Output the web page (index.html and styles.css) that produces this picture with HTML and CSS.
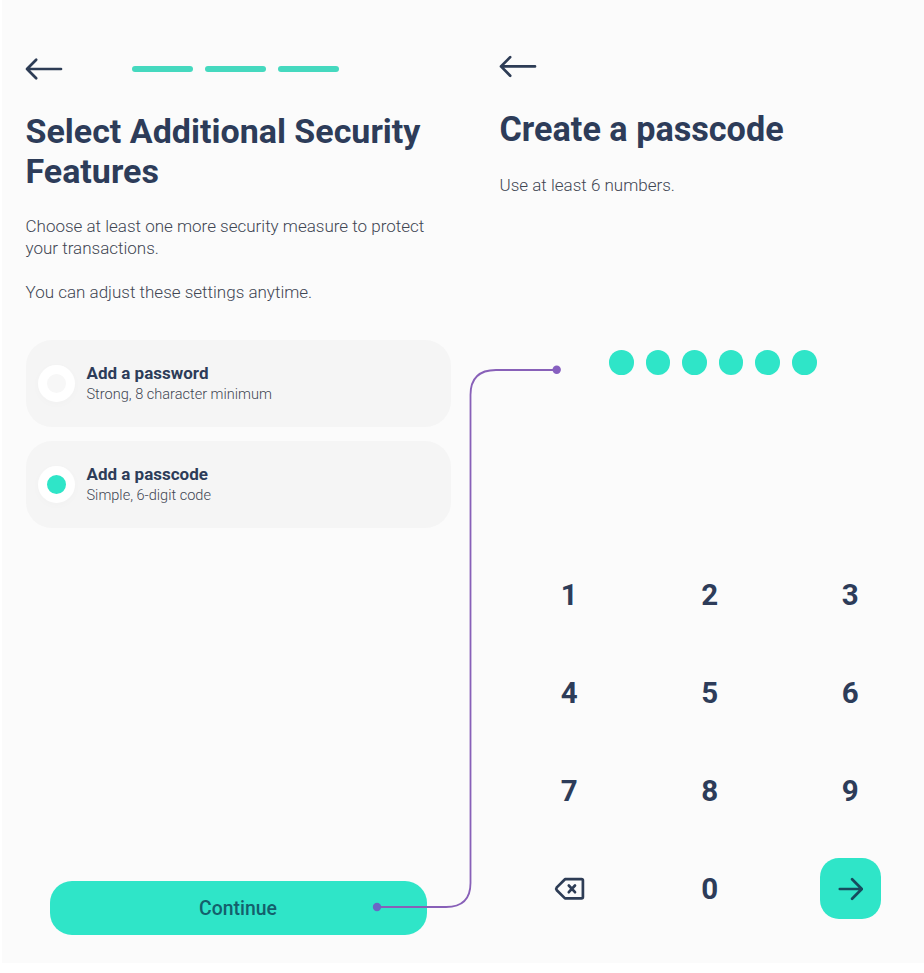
FILE: index.html
```html
<!DOCTYPE html>
<html lang="en">
<head>
<meta charset="utf-8">
<title>Security setup</title>
<link rel="stylesheet" href="styles.css">
</head>
<body>
<main class="board">
  <section class="screen screen-features">
    <header class="topbar">
      <svg class="back" width="38" height="24" viewBox="0 0 38 24"><path d="M36 12H2M11.200 2.700L2 12L11.200 21.300"/></svg>
      <div class="steps"><span class="step"></span><span class="step"></span><span class="step"></span></div>
    </header>
    <h1 class="title">Select Additional Security<br>Features</h1>
    <p class="copy">Choose at least one more security measure to protect<br>your transactions.</p>
    <p class="copy">You can adjust these settings anytime.</p>
    <div class="options">
      <div class="option">
        <span class="radio"></span>
        <div class="option-text"><div class="option-name">Add a password</div><div class="option-note">Strong, 8 character minimum</div></div>
      </div>
      <div class="option">
        <span class="radio radio-on"></span>
        <div class="option-text"><div class="option-name">Add a passcode</div><div class="option-note">Simple, 6-digit code</div></div>
      </div>
    </div>
    <button class="continue">Continue</button>
  </section>

  <section class="screen screen-passcode">
    <header class="topbar">
      <svg class="back" width="38" height="24" viewBox="0 0 38 24"><path d="M36 12.400H2M11.200 3.100L2 12.400L11.200 21.700"/></svg>
    </header>
    <h1 class="title">Create a passcode</h1>
    <p class="copy">Use at least 6 numbers.</p>
    <div class="dots"><i class="dot"></i><i class="dot"></i><i class="dot"></i><i class="dot"></i><i class="dot"></i><i class="dot"></i></div>
    <div class="keypad">
      <span class="key">1</span><span class="key">2</span><span class="key">3</span>
      <span class="key">4</span><span class="key">5</span><span class="key">6</span>
      <span class="key">7</span><span class="key">8</span><span class="key">9</span>
      <span class="key"><svg class="erase" width="32" height="24" viewBox="-1.500 0 32 24"><path d="M10.500 2.200H27Q28.400 2.200 28.400 3.600V20Q28.400 21.400 27 21.400H10.500L2.300 13.200Q1.200 11.800 2.300 10.400Z"/><path d="M14.300 8.500L20.500 15.200M20.500 8.500L14.300 15.200"/></svg></span>
      <span class="key">0</span>
      <span class="key"><span class="submit"><svg width="26" height="24" viewBox="0 0 26 24"><path d="M2.800 12H24.800M15.100 2.200L24.800 12L15.100 21.800"/></svg></span></span>
    </div>
  </section>

  <svg class="connector" width="200" height="560" viewBox="0 0 200 560">
    <path d="M191 15H130Q104.500 15 104.500 40V528Q104.500 552 80 552H11"/>
    <circle cx="190.700" cy="14.700" r="4.200"/><circle class="start" cx="11" cy="552" r="4.200"/>
  </svg>
</main>
</body>
</html>
```
FILE: styles.css
```css
* { box-sizing: border-box; }
body { margin: 0; background: #fff; font-family: Roboto, sans-serif; color: #2d3c59; }
.board { position: relative; display: flex; width: 924px; height: 963px; padding-left: 2px; overflow: hidden; }
.screen { background: #fbfbfb; height: 963px; display: flex; flex-direction: column; }
.screen-features { width: 474px; padding: 57px 0 0 23.5px; }
.screen-passcode { width: 448px; padding: 54px 0 0 23.5px; }
.topbar { display: flex; align-items: center; height: 24px; }
.back { display: block; flex: none; margin-left: -1px; }
svg path { fill: none; stroke: #2d3c55; stroke-width: 2.7; stroke-linecap: round; stroke-linejoin: round; }
.steps { display: flex; gap: 12px; margin-left: 69.5px; }
.step { width: 61px; height: 6.5px; border-radius: 4px; background: #45d9bf; }
.title { margin: 30px 0 0; font-size: 34px; line-height: 40px; font-weight: 700; white-space: nowrap; }
.screen-passcode .title { margin-top: 31px; font-size: 34.2px; }
.copy { margin: 24px 0 0; font-size: 17px; line-height: 22px; font-weight: 300; color: #3f4653; white-space: nowrap; }
.copy + .copy { margin-top: 22px; }
.screen-passcode .copy { margin-top: 25px; }
.options { display: flex; flex-direction: column; gap: 14px; margin-top: 37px; width: 425px; }
.option { display: flex; align-items: center; height: 87px; padding-left: 12px; border-radius: 26px; background: #f5f5f5; }
.radio { width: 37px; height: 37px; border: 9.5px solid #fff; border-radius: 50%; background: #f7f7f7; box-shadow: 0 2px 10px rgba(0, 0, 0, .02); }
.radio-on { background: #2fe5c8; }
.option-text { margin-left: 12px; }
.option-name { font-size: 17px; line-height: 21px; font-weight: 700; }
.option-note { padding-top: 1px; font-size: 14.55px; line-height: 20px; font-weight: 300; color: #3f4653; }
.continue { width: 377px; height: 54px; margin: 353px 0 0 24.5px; padding: 1px 1px 0 0; border: 0; border-radius: 22px; background: #2fe5c8; color: #14606c; font: 500 19.4px/53px Roboto, sans-serif; }
.dots { display: flex; gap: 12px; margin: 154px 0 0 109.5px; }
.dot { width: 24.6px; height: 24.6px; border-radius: 50%; background: #2fe5c8; }
.keypad { display: grid; grid-template-columns: repeat(3, 140.5px); grid-template-rows: repeat(4, 97.7px); margin: 172px 0 0 -0.5px; }
.key { display: flex; align-items: center; justify-content: center; font-size: 29.5px; line-height: 36px; font-weight: 700; }
.submit { display: flex; align-items: center; justify-content: center; width: 61px; height: 61px; border-radius: 19px; background: #2fe5c8; }
.submit path { stroke: #174b5e; }
.connector { position: absolute; left: 366px; top: 355px; }
.connector path { stroke: #8860b8; stroke-width: 1.8; }
.connector circle { fill: #8760c0; }
.connector .start { fill: #6a66c6; }
```
